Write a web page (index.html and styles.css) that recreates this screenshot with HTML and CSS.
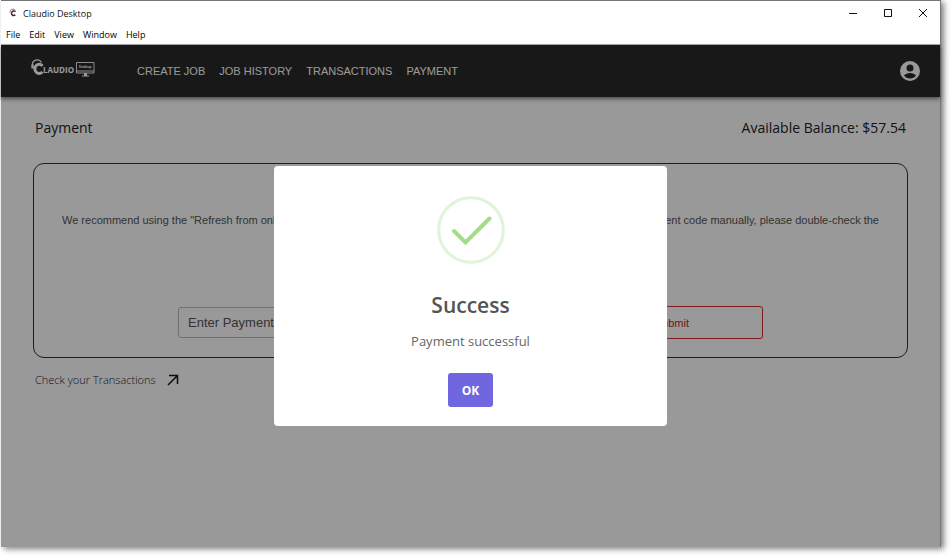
FILE: index.html
```html
<!DOCTYPE html>
<html lang="en">
<head>
<meta charset="utf-8">
<title>Claudio Desktop</title>
<link rel="stylesheet" href="styles.css">
</head>
<body>
<div class="window">
  <header class="titlebar">
    <svg class="app-icon" viewBox="0 0 8 10" aria-hidden="true"><path d="M6.3 3.800A2.200 2.200 0 1 0 6.300 6.800" fill="none" stroke="#333" stroke-width="1.5"/><path d="M1 4.500A3 3 0 0 1 6.500 2.500" fill="none" stroke="#d55" stroke-width="1"/></svg>
    <span class="app-name">Claudio Desktop</span>
    <div class="window-controls">
      <button aria-label="Minimize"><svg viewBox="0 0 10 10"><path d="M1 5.5h8"/></svg></button>
      <button aria-label="Maximize"><svg viewBox="0 0 10 10"><path d="M1.5 1.5h7v7h-7z"/></svg></button>
      <button aria-label="Close"><svg viewBox="0 0 10 10"><path d="M1 1l8 8M9 1l-8 8"/></svg></button>
    </div>
  </header>
  <nav class="menubar">
    <button>File</button><button>Edit</button><button>View</button><button>Window</button><button>Help</button>
  </nav>
  <div class="app">
    <nav class="navbar">
      <svg class="logo" viewBox="0 0 66 22" role="img" aria-label="Claudio Desktop">
        <path d="M12.500 9A4.300 4.600 0 1 0 12.500 14.800" fill="none" stroke="#fff" stroke-width="3"/>
        <path d="M2.500 8.500A4.800 4.800 0 0 1 11.500 5.500" fill="none" stroke="#fff" stroke-width="1.300"/>
        <path d="M2.500 7.500v4" stroke="#fff" stroke-width="2.400"/>
        <text class="logo-name" x="13" y="16">LAUDIO</text>
        <path d="M46.500 5.500h17.500v10.500h-17.500zM46.500 14h17.500" fill="none" stroke="#fff" stroke-width=".9"/>
        <path d="M54 16h3v2.400h2v1h-7v-1h2z" fill="#fff"/>
        <text class="logo-screen" x="49" y="11">Desktop</text>
      </svg>
      <div class="links">
        <a href="#">CREATE JOB</a><a href="#">JOB HISTORY</a><a href="#">TRANSACTIONS</a><a href="#">PAYMENT</a>
      </div>
      <button class="account" aria-label="Account"><svg viewBox="2 2 20 20"><path fill="#fff" d="M12 2a10 10 0 1 0 0 20 10 10 0 0 0 0-20zm0 3.4a3.5 3.5 0 1 1 0 7 3.5 3.5 0 0 1 0-7zM12 19.600a7.500 7.500 0 0 1-6-3c.9-1.600 4-2.500 6-2.500s5.100.9 6 2.500a7.500 7.500 0 0 1-6 3z"/></svg></button>
    </nav>
    <main class="content">
      <div class="heading">
        <h1>Payment</h1>
        <p>Available Balance: $57.54</p>
      </div>
      <section class="card">
        <p class="advice"><span>We recommend using the "Refresh from online" button.</span> <span>If you enter the payment code manually, please double-check the</span></p>
        <form class="payment-form">
          <input type="text" placeholder="Enter Payment Code" aria-label="Payment code">
          <button type="button">Submit</button>
        </form>
      </section>
      <a class="transactions" href="#">Check your Transactions <svg viewBox="0 0 12 12" aria-hidden="true"><path d="M1 11L10 2M2 1.500h8.500V10" fill="none" stroke="#0b1c2c" stroke-width="1.500"/></svg></a>
    </main>
    <div class="overlay">
      <div class="dialog" role="dialog" aria-labelledby="dialog-title">
        <svg class="check" viewBox="0 0 68 68" aria-hidden="true"><circle cx="34" cy="34" r="32.300" fill="none" stroke="#e1f3d8" stroke-width="3"/><path d="M17 35l11.500 11.500L52.500 22.500" fill="none" stroke="#a5dc86" stroke-width="4" stroke-linecap="round"/></svg>
        <h2 id="dialog-title">Success</h2>
        <p>Payment successful</p>
        <button>OK</button>
      </div>
    </div>
  </div>
</div>
</body>
</html>
```
FILE: styles.css
```css
* { box-sizing: border-box; }
body {
  margin: 0;
  height: 100vh;
  padding: 0 10px 9px 1px;
  background: #fff;
  font-family: "Open Sans", "Noto Sans", sans-serif;
  overflow: hidden;
}
h1, h2, p { margin: 0; font-weight: 400; }
button { font: inherit; border: 0; background: none; padding: 0; }
a { color: inherit; text-decoration: none; }
.window {
  height: 100%;
  display: flex;
  flex-direction: column;
  border-top: 1px solid #777;
  border-right: 1px solid #777;
  background: #fff;
  box-shadow: 3px 2px 6px rgba(0, 0, 0, .5);
}
.titlebar {
  display: flex;
  align-items: center;
  height: 24px;
  padding-left: 8px;
  font-size: 9px;
  color: #111;
}
.app-icon { width: 8px; height: 10px; margin-right: 6px; }
.window-controls { display: flex; margin-left: auto; }
.window-controls button { width: 35px; display: grid; place-items: center; }
.window-controls svg { width: 10px; height: 10px; fill: none; stroke: #111; stroke-width: 1; }
.menubar {
  display: flex;
  gap: 9px;
  height: 20px;
  padding: 0 5px;
  border-bottom: 1px solid #b0b0b0;
  font-size: 9px;
  line-height: 18px;
  color: #222;
}
.app {
  position: relative;
  flex: 1;
  min-height: 0;
  background: #fff;
}
.navbar {
  display: flex;
  align-items: center;
  height: 52px;
  padding: 0 20px 0 29px;
  background: #282828;
  box-shadow: 0 2px 4px rgba(0, 0, 0, .5);
}
.logo { width: 66px; height: 22px; margin-bottom: 6px; }
.logo-name { font: 700 8px "Open Sans", sans-serif; fill: #fff; }
.logo-screen { font: 700 3px "Open Sans", sans-serif; fill: #fff; }
.links {
  display: flex;
  gap: 14px;
  margin-left: 41px;
  font: 11px "Liberation Sans", sans-serif;
  color: #fff;
}
.account { margin-left: auto; width: 20px; height: 20px; }
.account svg { display: block; width: 20px; height: 20px; }
.content { padding: 20px 32px; }
.heading {
  display: flex;
  justify-content: space-between;
  padding: 0 2px;
  font-size: 14px;
  line-height: 22px;
  color: #222;
}
.heading h1 { font-size: 14px; }
.card {
  margin-top: 24px;
  height: 195px;
  border: 1px solid #333;
  border-radius: 11px;
  padding: 48px 28px 18px;
  display: flex;
  flex-direction: column;
  justify-content: space-between;
}
.advice {
  display: flex;
  justify-content: space-between;
  font: 11px/16px "Liberation Sans", sans-serif;
  color: #555;
  white-space: nowrap;
}
.payment-form {
  display: grid;
  grid-template-columns: 15fr 7fr;
  align-items: center;
  gap: 12px;
  padding: 0 116px;
  font-family: "Liberation Sans", sans-serif;
}
.payment-form input {
  min-width: 0;
  height: 31px;
  border: 1px solid #bbb;
  border-radius: 3px;
  padding: 0 9px;
  background: transparent;
  font: 13px "Liberation Sans", sans-serif;
}
.payment-form input::placeholder { color: #555; }
.payment-form button {
  height: 33px;
  border: 1px solid #d32f2f;
  border-radius: 3px;
  font-size: 11px;
  color: #c62828;
}
.transactions {
  display: inline-flex;
  align-items: center;
  gap: 11px;
  margin: 14px 2px;
  font-size: 11px;
  line-height: 16px;
  font-weight: 300;
  color: #223;
}
.transactions svg { width: 12px; height: 12px; }
.overlay {
  position: absolute;
  inset: 0;
  display: grid;
  place-items: center;
  background: rgba(0, 0, 0, .4);
}
.dialog {
  width: 393px;
  max-width: 90%;
  display: flex;
  flex-direction: column;
  align-items: center;
  padding: 30px 20px 19px;
  border-radius: 4px;
  background: #fff;
}
.check { width: 68px; height: 68px; }
.dialog h2 {
  margin-top: 26px;
  font-size: 21px;
  line-height: 30px;
  font-weight: 600;
  color: #545454;
}
.dialog p {
  margin-top: 11px;
  font-size: 13px;
  line-height: 20px;
  color: #666;
}
.dialog button {
  width: 45px;
  height: 34px;
  margin-top: 22px;
  border-radius: 3px;
  background: #7066e0;
  color: #fff;
  font-size: 12px;
  font-weight: 700;
}
```
